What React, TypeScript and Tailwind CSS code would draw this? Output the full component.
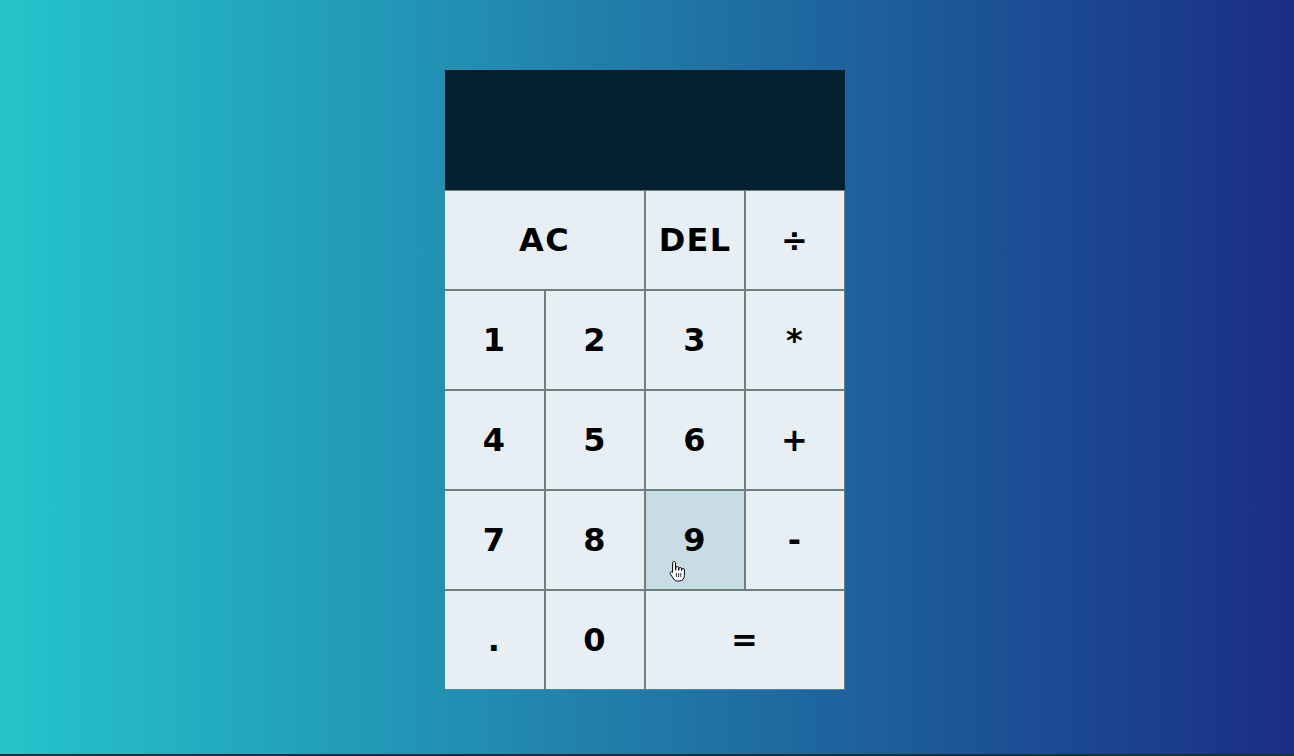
import React from "react";

const keys: { label: string; span?: boolean; hover?: boolean; first?: boolean }[] = [
  { label: "AC", span: true, first: true },
  { label: "DEL" },
  { label: "÷" },
  { label: "1", first: true },
  { label: "2" },
  { label: "3" },
  { label: "*" },
  { label: "4", first: true },
  { label: "5" },
  { label: "6" },
  { label: "+" },
  { label: "7", first: true },
  { label: "8" },
  { label: "9", hover: true },
  { label: "-" },
  { label: ".", first: true },
  { label: "0" },
  { label: "=", span: true },
];

export default function App() {
  return (
    <div className="w-[1294px] h-[756px] bg-[#15303f] overflow-hidden">
      <div
        className="h-[754px] w-full bg-gradient-to-r from-[#25c5cb] via-[#2179a8] to-[#1b2d85] flex justify-center pt-[70px] pr-[4px]"
        style={{ fontFamily: '"DejaVu Sans", "Noto Sans", sans-serif' }}
      >
        <div className="relative grid grid-cols-[repeat(4,100px)] grid-rows-[120px_repeat(5,100px)] w-[400px] h-[620px]">
          <div className="col-span-4 bg-[#03202f]" />
          {keys.map((k, i) => (
            <button
              key={i}
              className={`${k.span ? "col-span-2" : ""} ${
                k.hover ? "bg-[#c8dce6]" : "bg-[#e8eff4]"
              } border-t border-r border-b border-[#6e7d7d] ${
                k.first ? "" : "border-l"
              } text-[32px] font-bold tracking-[0.04em] text-black flex items-center justify-center`}
            >
              {k.label}
            </button>
          ))}
          <div className="absolute left-[224px] top-[490px] pointer-events-none">
            <svg width="18" height="22" viewBox="0 0 18 22">
              <path
                d="M5 1.5c.9 0 1.5.6 1.5 1.5v7h.3V7.8c0-.8.6-1.3 1.4-1.3s1.4.5 1.4 1.3v2.4h.3V8.8c0-.8.6-1.3 1.3-1.3s1.3.5 1.3 1.3v1.6h.3v-.8c0-.7.6-1.2 1.3-1.2s1.3.5 1.3 1.2v6c0 3-2 5.4-5 5.4H8.5c-1.7 0-2.8-.7-3.8-2L1.3 14c-.5-.7-.3-1.5.3-1.9.6-.4 1.4-.3 1.9.3l.1.1V3c0-.9.5-1.5 1.4-1.5z"
                fill="white"
                stroke="black"
                strokeWidth="1"
              />
              <path d="M7.4 13v4M9.6 13v4M11.8 13v4" stroke="black" strokeWidth="0.8" />
            </svg>
          </div>
        </div>
      </div>
    </div>
  );
}
